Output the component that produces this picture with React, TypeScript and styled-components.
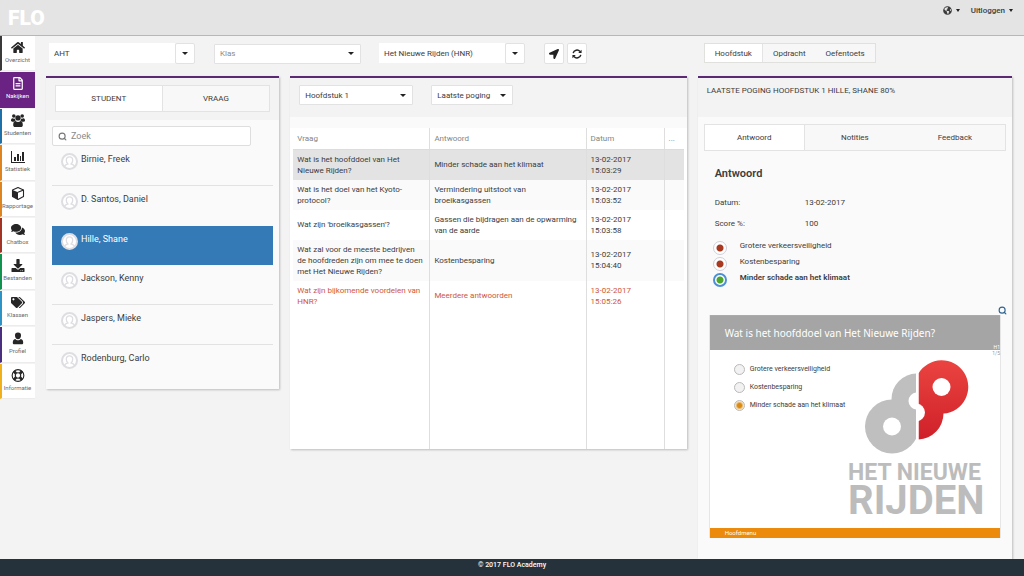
import React from "react";
import styled, { createGlobalStyle, css } from "styled-components";
import {
  FaHome,
  FaRegFileAlt,
  FaComments,
  FaDownload,
  FaTags,
  FaLocationArrow,
  FaGlobeAmericas,
} from "react-icons/fa";
import { Search } from "lucide-react";

const GlobalStyle = createGlobalStyle`
  *, *::before, *::after { box-sizing: border-box; }
  body {
    margin: 0;
    background: #f3f3f4;
    color: #3c3c3c;
    font: 8px/11px Roboto, "Noto Sans", sans-serif;
  }
  button, input, select { font: inherit; color: inherit; margin: 0; }
  button { cursor: pointer; }
`;

const Page = styled.div`
  min-height: 100vh;
  display: flex;
  flex-direction: column;
`;

/* ---------- header ---------- */

const Header = styled.header`
  display: flex;
  justify-content: space-between;
  align-items: flex-start;
  height: 36px;
  padding: 0 11px 0 8px;
  background: #e4e4e4;
  border-bottom: 1px solid #c2b98f;
`;

const Brand = styled.a`
  padding-top: 6px;
  color: #fff;
  font: 900 21px/24px Roboto, sans-serif;
  text-decoration: none;
`;

const HeaderMenu = styled.nav`
  display: flex;
  gap: 11px;
  padding-top: 3px;
`;

const MenuButton = styled.button`
  display: flex;
  align-items: center;
  gap: 4px;
  height: 14px;
  padding: 0;
  border: 0;
  background: none;
  font-weight: 500;
`;

const CaretSvg = styled.svg`
  flex: none;
  width: ${(p: { $w?: number }) => p.$w ?? 6}px;
  height: 3px;
  fill: #222;
`;

const Caret = ({ size }: { size?: number }) => (
  <CaretSvg $w={size} viewBox="0 0 6 3" preserveAspectRatio="none" aria-hidden>
    <path d="M0 0h6L3 3z" />
  </CaretSvg>
);

/* ---------- shell ---------- */

const Shell = styled.div`
  flex: 1;
  display: flex;
  align-items: stretch;
`;

const Sidebar = styled.nav`
  flex: none;
  align-self: flex-start;
  width: 35px;
  min-height: 364px;
  display: grid;
  grid-template-columns: minmax(0, 1fr);
  grid-template-rows: repeat(10, 1fr);
`;

const SideLink = styled.a<{ $color: string; $active?: boolean }>`
  display: flex;
  flex-direction: column;
  align-items: center;
  gap: 1px;
  padding: 5px 2px 0 0;
  margin-bottom: 1px;
  border-left: 2px solid ${(p) => p.$color};
  border-bottom: 1px solid ${(p) => (p.$active ? p.$color : "#ececec")};
  background: ${(p) => (p.$active ? p.$color : "#fff")};
  color: ${(p) => (p.$active ? "#fff" : "#6a6a6a")};
  font-size: 6px;
  line-height: 10px;
  text-decoration: none;
  white-space: nowrap;

  svg {
    flex: none;
    width: 14px;
    height: 13px;
    color: ${(p) => (p.$active ? "#fff" : "#262626")};
  }
`;

const Main = styled.main`
  flex: 1;
  min-width: 0;
  display: grid;
  grid-template-columns: minmax(0, 233fr) minmax(0, 396fr) minmax(0, 314fr);
  grid-template-rows: 40px 1fr;
  column-gap: 11px;
  align-items: start;
  padding: 0 12px 0 11px;
`;

const Filters = styled.div`
  grid-column: span 2;
  display: flex;
  align-items: center;
  padding: 7px 0 0 3px;
`;

const Combo = styled.div`
  display: flex;
  width: 146px;
  margin-right: 19px;
`;

const ComboInput = styled.input`
  flex: 1;
  min-width: 0;
  height: 20px;
  padding: 0 5px;
  border: 0;
  background: #fff;
`;

const SquareButton = styled.button`
  display: flex;
  align-items: center;
  justify-content: center;
  width: 20px;
  height: 21px;
  padding: 0;
  border: 1px solid #e2e2e2;
  border-radius: 2px;
  background: #fff;
  color: #222;
  svg { display: block; }
`;

const IconButtons = styled.div`
  display: flex;
  gap: 3px;
`;

const SelectBox = styled.div<{ $width: number }>`
  display: grid;
  align-items: center;
  width: ${(p) => p.$width}px;
  margin-right: 18px;

  > * { grid-area: 1 / 1; }
  svg { justify-self: end; margin-right: 7px; pointer-events: none; }
`;

const SelectField = styled.select<{ $muted?: boolean }>`
  appearance: none;
  width: 100%;
  height: 20px;
  padding: 0 5px;
  border: 1px solid #e2e2e2;
  border-radius: 1px;
  background: #fff;
  color: ${(p) => (p.$muted ? "#8b8b8b" : "inherit")};
`;

const DropDown = ({ label, value, width, muted }: { label: string; value: string; width: number; muted?: boolean }) => (
  <SelectBox $width={width}>
    <SelectField aria-label={label} $muted={muted} defaultValue={value}>
      <option>{value}</option>
    </SelectField>
    <Caret />
  </SelectBox>
);

const Segments = styled.div`
  justify-self: start;
  display: flex;
  margin: 7px 0 0 6px;
  border: 1px solid #e0e0dc;
`;

const Segment = styled.button<{ $active?: boolean }>`
  height: 18px;
  padding: 0 10px;
  border: 0;
  border-right: ${(p) => (p.$active ? "1px solid #e4e4e4" : "0")};
  background: ${(p) => (p.$active ? "#fff" : "#f7f7f7")};
`;

/* ---------- panels ---------- */

const Panel = styled.section<{ $fill?: boolean }>`
  border-top: 2px solid #5c2a72;
  background: #fafafa;
  box-shadow: 1px 1px 2px rgba(0, 0, 0, 0.22);
  ${(p) => p.$fill && css`align-self: stretch;`}
`;

const PanelHead = styled.div<{ $height: number }>`
  height: ${(p) => p.$height}px;
  background: #f3f3f4;
`;

const TabStrip = styled.div<{ $columns: number }>`
  display: grid;
  grid-template-columns: repeat(${(p) => p.$columns}, 1fr);
  border: 1px solid #e3e3e3;
`;

const Tab = styled.button<{ $active?: boolean }>`
  height: 25px;
  padding: 0;
  border: 0;
  border-right: ${(p) => (p.$active ? "1px solid #e3e3e3" : "0")};
  background: ${(p) => (p.$active ? "#fff" : "#f8f8f8")};
`;

/* ---------- students ---------- */

const StudentHead = styled(PanelHead)`
  padding: 7px 9px 0;
`;

const StudentBody = styled.div`
  padding: 6px 6px 4px;
`;

const SearchBox = styled.label`
  display: flex;
  align-items: center;
  gap: 4px;
  width: 90%;
  height: 20px;
  padding: 0 5px;
  border: 1px solid #dedede;
  border-radius: 2px;
  background: #fff;
  color: #777;
  font-size: 9px;

  input {
    flex: 1;
    min-width: 0;
    padding: 0;
    border: 0;
    outline: 0;
    background: none;
  }
  input::placeholder { color: #8a8a8a; opacity: 1; }
`;

const StudentList = styled.ul`
  display: grid;
  grid-template-rows: repeat(6, 1fr);
  min-height: 239px;
  margin: 0;
  padding: 0;
  list-style: none;
`;

const StudentRow = styled.li<{ $active?: boolean }>`
  border-bottom: 1px solid #e2e2e2;
  &:last-child { border-bottom: 0; }
  &:nth-child(2) { border-bottom-color: transparent; }
  ${(p) => p.$active && css`
    background: #337ab7;
    color: #fff;
    border-bottom-color: #337ab7;
  `}
`;

const StudentButton = styled.button`
  display: flex;
  align-items: flex-start;
  gap: 3px;
  width: 100%;
  height: 100%;
  padding: 6px 9px 0;
  border: 0;
  background: none;
  font-size: 9px;
  line-height: 14px;
  text-align: left;

  svg { flex: none; margin-top: 1px; }
`;

const Avatar = () => (
  <svg width="17" height="17" viewBox="0 0 17 17" aria-hidden>
    <circle cx="8.500" cy="8.500" r="7.500" fill="#fff" stroke="#dedee2" strokeWidth="2" />
    <path
      d="M3.500 13.500c.4-1.700 2-2.200 3.400-2.600-1.100-1-1.600-2.300-1.600-3.700 0-2 1.300-3.400 3.200-3.400s3.200 1.400 3.200 3.400c0 1.400-.5 2.700-1.600 3.700 1.400.4 3 .9 3.400 2.600"
      fill="none"
      stroke="#dedee2"
      strokeWidth="1.300"
    />
  </svg>
);

/* ---------- answers table ---------- */

const TableHead = styled(PanelHead)`
  display: flex;
  align-items: flex-start;
  padding: 7px 9px 0;
`;

const TableBody = styled.div`
  padding: 11px 3px 0;
  background: linear-gradient(#fafafa 11px, #fff 11px);
`;

const AnswerTable = styled.table`
  width: 100%;
  border-collapse: collapse;
  table-layout: fixed;
  background: #fff;

  th {
    height: 21px;
    padding: 1px 4px 0;
    border-bottom: 1px solid #dcdcdc;
    color: #858585;
    font-weight: 400;
    text-align: left;
  }
  td { padding: 4px 6px 4px 4px; vertical-align: middle; }
  th + th, td + td { border-left: 1px solid #dedede; }
`;

const AnswerRow = styled.tr<{ $tone: "selected" | "even" | "odd" | "wrong" }>`
  background: ${(p) => ({ selected: "#e3e3e3", even: "#fafafa", odd: "#fff", wrong: "#fff" })[p.$tone]};
  color: ${(p) => (p.$tone === "wrong" ? "#cf5638" : "inherit")};
`;

const FillerRow = styled.tr`
  height: 138px;
`;

/* ---------- answer detail ---------- */

const DetailHead = styled(PanelHead)`
  padding: 7px 9px 0;
  text-transform: uppercase;
`;

const DetailBody = styled.div`
  padding: 7px 6px 20px;
`;

const Detail = styled.div`
  padding: 0 5px;
`;

const DetailTitle = styled.h2`
  margin: 16px 0 0 6px;
  font-size: 11px;
  line-height: 14px;
  font-weight: 600;
`;

const Facts = styled.dl`
  display: grid;
  grid-template-columns: 90px 1fr;
  row-gap: 10px;
  margin: 16px 0 0 6px;
  dd { margin: 0; }
`;

const Options = styled.div`
  margin-top: 11px;
`;

const Option = styled.label<{ $strong?: boolean }>`
  display: flex;
  align-items: flex-start;
  gap: 13px;
  height: 16px;
  padding-left: 4px;
  font-weight: ${(p) => (p.$strong ? 600 : 400)};
`;

const MarkRadio = styled.input<{ $good?: boolean }>`
  appearance: none;
  flex: none;
  width: 14px;
  height: 14px;
  margin-top: 1px;
  border: ${(p) => (p.$good ? "2px solid #4b8fd6" : "1px solid #cfcfd6")};
  border-radius: 50%;
  background: radial-gradient(circle, ${(p) => (p.$good ? "#4fa62c" : "#a83a22")} 3px, #fff 4px);
`;

const ZoomLine = styled.div`
  display: flex;
  justify-content: flex-end;
  margin: 18px -6px 0 0;
`;

const ZoomButton = styled.button`
  display: flex;
  padding: 0;
  border: 0;
  background: none;
  color: #2f6391;
`;

const Slide = styled.article`
  display: flex;
  flex-direction: column;
  border: 1px solid #e6e6e6;
  border-width: 0 1px;
  background: #fff;
`;

const SlideHead = styled.header`
  display: flex;
  justify-content: space-between;
  height: 35px;
  padding: 0 0 0 15px;
  border-top: 1px solid #d9a650;
  background: #a5a5a5;
  color: #fff;

  h3 {
    margin: 0;
    font: 400 10px/34px "Noto Sans", sans-serif;
  }
  small {
    align-self: flex-end;
    font-size: 5px;
    line-height: 6px;
  }
`;

const SlideBody = styled.div`
  display: grid;
  grid-template-columns: 1fr auto auto;
  column-gap: 6px;
  min-height: 178px;
  padding-left: 24px;

  small {
    color: #999;
    font-size: 5px;
    line-height: 6px;
  }
`;

const SlideOptions = styled.div`
  width: 0;
  padding-top: 10px;
  white-space: nowrap;
`;

const SlideOption = styled.label`
  display: flex;
  align-items: center;
  gap: 5px;
  height: 18px;
  font-size: 7px;
`;

const SlideRadio = styled.input`
  appearance: none;
  flex: none;
  width: 11px;
  height: 11px;
  border: 1px solid #b9b9b9;
  border-radius: 50%;
  background: #f2f2f2;
  &:checked { background: radial-gradient(circle, #d98a12 2px, #f6e6c8 4px); }
`;

const SlideLogo = styled.svg`
  width: 138px;
  height: 164px;
  margin-top: 5px;
  overflow: visible;
`;

const SlideFoot = styled.footer`
  height: 10px;
  padding-left: 15px;
  background: #ec8a0c;
  color: #fff;
  font-size: 6px;
  line-height: 10px;
`;

const Footer = styled.footer`
  height: 17px;
  background: #25313b;
  color: #fff;
  font-size: 7px;
  line-height: 13px;
  font-weight: 500;
  text-align: center;
`;

/* ---------- icons that no package has in this shape ---------- */

const BarsIcon = () => (
  <svg viewBox="0 0 14 13" fill="currentColor" aria-hidden>
    <path d="M0 1h1v11h13v1H0zM3 7h2v4H3zM6 4h2v7H6zM9 6h1v5H9zM11 2h2v9h-2z" />
  </svg>
);

const GroupIcon = () => (
  <svg viewBox="0 0 14 13" fill="currentColor" aria-hidden>
    <circle cx="2.800" cy="2" r="1.800" />
    <circle cx="11.200" cy="2" r="1.800" />
    <circle cx="7" cy="3.900" r="2.700" />
    <path d="M1.600 4.200c1 .6 1.500.6 2.300.2 0 1 .2 1.700.9 2.300-.9.100-1.500.4-1.900 1H1.400C.5 7.700 0 7.300 0 6.500c0-1.200.4-2.300 1.600-2.300zM12.400 4.200c-1 .6-1.500.6-2.300.2 0 1-.2 1.700-.9 2.300.9.100 1.500.4 1.900 1h1.500c.9 0 1.400-.4 1.400-1.200 0-1.200-.4-2.300-1.600-2.300z" />
    <path d="M4.500 6.900c1.600 1.300 3.400 1.300 5 0 1.700.1 2.300 1.800 2.300 4 0 1.300-.7 2.100-2 2.100H4.200c-1.300 0-2-.8-2-2.100 0-2.200.6-3.900 2.300-4z" />
  </svg>
);

const BoxIcon = () => (
  <svg viewBox="0 0 14 13" aria-hidden>
    <path
      d="M7 .6l5.500 2.300v6.600L7 12.400 1.500 9.500V2.900z"
      fill="#fff"
      stroke="currentColor"
      strokeWidth="1.100"
      strokeLinejoin="round"
    />
    <path d="M1.500 2.900L7 5.300v7.100L1.500 9.500z" fill="currentColor" />
    <path d="M7 5.300l5.500-2.400" stroke="currentColor" strokeWidth="1.100" />
  </svg>
);

const PersonIcon = () => (
  <svg viewBox="0 0 14 13" fill="currentColor" aria-hidden>
    <path d="M7 .5a3 3 0 0 1 3 3.200C10 5.600 8.700 7.300 7 7.300S4 5.600 4 3.700A3 3 0 0 1 7 .5zM4.200 6.900c.8.900 1.700 1.300 2.800 1.300s2-.4 2.800-1.300c1.800.2 2.400 1.700 2.400 3.800 0 1-.6 1.600-1.500 1.600H3.300c-.9 0-1.500-.6-1.500-1.600 0-2.100.6-3.600 2.400-3.800z" />
  </svg>
);

const RingIcon = () => (
  <svg viewBox="0 0 14 14" fill="none" stroke="currentColor" aria-hidden>
    <circle cx="7" cy="7" r="6.300" strokeWidth="1.200" />
    <circle cx="7" cy="7" r="2.900" strokeWidth="1.200" />
    <path d="M2.500 2.500l2.400 2.400M11.500 2.500L9.100 4.900M2.500 11.500l2.400-2.400M11.500 11.500L9.100 9.100" strokeWidth="3" />
  </svg>
);

const RefreshIcon = () => (
  <svg width="10" height="10" viewBox="0 0 12 12" fill="none" stroke="currentColor" strokeWidth="1.700" aria-hidden>
    <path d="M1.400 5A4.700 4.700 0 0 1 9.600 3M10.600 7A4.700 4.700 0 0 1 2.400 9" />
    <path d="M11.500.8v4H7.500zM.5 11.200v-4h4z" fill="currentColor" stroke="none" />
  </svg>
);

const HnrLogo = () => (
  <SlideLogo viewBox="848 356 138 164" role="img" aria-label="Het Nieuwe Rijden">
    <defs>
      <linearGradient id="hnr-red" x1="0" y1="0" x2="0" y2="1">
        <stop offset="0" stopColor="#ea4440" />
        <stop offset="1" stopColor="#cf2029" />
      </linearGradient>
      <clipPath id="hnr-left"><path d="M848 356h68v110h-68z" /></clipPath>
      <clipPath id="hnr-right"><path d="M918.500 356H986v110h-67.500z" /></clipPath>
      <mask id="hnr-grey-holes">
        <path d="M848 356h138v164H848z" fill="#fff" />
        <circle cx="892" cy="427.500" r="9" />
        <circle cx="917" cy="402" r="8.500" />
      </mask>
      <mask id="hnr-red-holes">
        <path d="M848 356h138v164H848z" fill="#fff" />
        <circle cx="941.500" cy="388" r="9" />
        <circle cx="916" cy="413.500" r="9" />
      </mask>
    </defs>
    <g clipPath="url(#hnr-left)">
      <g mask="url(#hnr-grey-holes)" fill="#bfbfbf">
        <circle cx="892" cy="427.500" r="27" />
        <circle cx="917" cy="400" r="25.500" />
        <path d="M900 410h16v25h-8z" />
      </g>
    </g>
    <g clipPath="url(#hnr-right)">
      <path
        mask="url(#hnr-red-holes)"
        fill="url(#hnr-red)"
        d="M918.500 374.500A26.700 26.700 0 1 1 943.500 414.600A26 26 0 0 1 918.500 440.500z"
      />
    </g>
    <g fill="#bcbcbc" fontFamily="Roboto, sans-serif" fontWeight="700">
      <text x="848" y="481" fontSize="23">HET NIEUWE</text>
      <text x="848" y="515" fontSize="40">RIJDEN</text>
    </g>
  </SlideLogo>
);

/* ---------- data ---------- */

const sideItems = [
  { label: "Overzicht", color: "#3a3a3a", icon: <FaHome /> },
  { label: "Nakijken", color: "#6b2383", icon: <FaRegFileAlt />, active: true },
  { label: "Studenten", color: "#1f6fa8", icon: <GroupIcon /> },
  { label: "Statistiek", color: "#dd8420", icon: <BarsIcon /> },
  { label: "Rapportage", color: "#dd8420", icon: <BoxIcon /> },
  { label: "Chatbox", color: "#a23426", icon: <FaComments /> },
  { label: "Bestanden", color: "#12924f", icon: <FaDownload /> },
  { label: "Klassen", color: "#2c93c4", icon: <FaTags /> },
  { label: "Profiel", color: "#4b2f7f", icon: <PersonIcon /> },
  { label: "Informatie", color: "#efb01c", icon: <RingIcon /> },
];

const students = ["Birnie, Freek", "D. Santos, Daniel", "Hille, Shane", "Jackson, Kenny", "Jaspers, Mieke", "Rodenburg, Carlo"];

const answers = [
  { q: "Wat is het hoofddoel van Het Nieuwe Rijden?", a: "Minder schade aan het klimaat", t: "15:03:29", tone: "selected" },
  { q: "Wat is het doel van het Kyoto-protocol?", a: "Vermindering uitstoot van broeikasgassen", t: "15:03:52", tone: "even" },
  { q: "Wat zijn 'broeikasgassen'?", a: "Gassen die bijdragen aan de opwarming van de aarde", t: "15:03:58", tone: "odd" },
  { q: "Wat zal voor de meeste bedrijven de hoofdreden zijn om mee te doen met Het Nieuwe Rijden?", a: "Kostenbesparing", t: "15:04:40", tone: "even" },
  { q: "Wat zijn bijkomende voordelen van HNR?", a: "Meerdere antwoorden", t: "15:05:26", tone: "wrong" },
] as const;

const options = ["Grotere verkeersveiligheid", "Kostenbesparing", "Minder schade aan het klimaat"];

export default function App() {
  return (
    <Page>
      <GlobalStyle />
      <Header>
        <Brand href="#">FLO</Brand>
        <HeaderMenu>
          <MenuButton aria-label="Taal">
            <FaGlobeAmericas size={9} />
            <Caret size={4} />
          </MenuButton>
          <MenuButton>
            Uitloggen
            <Caret size={4} />
          </MenuButton>
        </HeaderMenu>
      </Header>

      <Shell>
        <Sidebar>
          {sideItems.map((item) => (
            <SideLink key={item.label} href="#" $color={item.color} $active={item.active}>
              {item.icon}
              <span>{item.label}</span>
            </SideLink>
          ))}
        </Sidebar>

        <Main>
          <Filters>
            <Combo>
              <ComboInput aria-label="Bedrijf" defaultValue="AHT" />
              <SquareButton aria-label="Bedrijven tonen"><Caret /></SquareButton>
            </Combo>
            <DropDown label="Klas" value="Klas" width={147} muted />
            <Combo>
              <ComboInput aria-label="Cursus" defaultValue="Het Nieuwe Rijden (HNR)" />
              <SquareButton aria-label="Cursussen tonen"><Caret /></SquareButton>
            </Combo>
            <IconButtons>
              <SquareButton aria-label="Ga"><FaLocationArrow size={10} /></SquareButton>
              <SquareButton aria-label="Vernieuwen"><RefreshIcon /></SquareButton>
            </IconButtons>
          </Filters>
          <Segments>
            <Segment $active>Hoofdstuk</Segment>
            <Segment>Opdracht</Segment>
            <Segment>Oefentoets</Segment>
          </Segments>

          <Panel>
            <StudentHead $height={42}>
              <TabStrip $columns={2}>
                <Tab $active>STUDENT</Tab>
                <Tab>VRAAG</Tab>
              </TabStrip>
            </StudentHead>
            <StudentBody>
              <SearchBox>
                <Search size={9} strokeWidth={3} />
                <input type="text" placeholder="Zoek" aria-label="Zoek" />
              </SearchBox>
              <StudentList>
                {students.map((name) => (
                  <StudentRow key={name} $active={name === "Hille, Shane"}>
                    <StudentButton>
                      <Avatar />
                      {name}
                    </StudentButton>
                  </StudentRow>
                ))}
              </StudentList>
            </StudentBody>
          </Panel>

          <Panel>
            <TableHead $height={39}>
              <DropDown label="Hoofdstuk" value="Hoofdstuk 1" width={114} />
              <DropDown label="Poging" value="Laatste poging" width={82} />
            </TableHead>
            <TableBody>
              <AnswerTable>
                <colgroup>
                  <col style={{ width: "35%" }} />
                  <col style={{ width: "40%" }} />
                  <col style={{ width: "20%" }} />
                  <col style={{ width: "5%" }} />
                </colgroup>
                <thead>
                  <tr>
                    <th>Vraag</th>
                    <th>Antwoord</th>
                    <th>Datum</th>
                    <th>...</th>
                  </tr>
                </thead>
                <tbody>
                  {answers.map((row) => (
                    <AnswerRow key={row.t} $tone={row.tone}>
                      <td>{row.q}</td>
                      <td>{row.a}</td>
                      <td>13-02-2017<br />{row.t}</td>
                      <td />
                    </AnswerRow>
                  ))}
                  <FillerRow aria-hidden>
                    <td /><td /><td /><td />
                  </FillerRow>
                </tbody>
              </AnswerTable>
            </TableBody>
          </Panel>

          <Panel $fill>
            <DetailHead $height={39}>Laatste poging hoofdstuk 1 Hille, Shane 80%</DetailHead>
            <DetailBody>
              <TabStrip $columns={3}>
                <Tab $active>Antwoord</Tab>
                <Tab>Notities</Tab>
                <Tab>Feedback</Tab>
              </TabStrip>
              <Detail>
                <DetailTitle>Antwoord</DetailTitle>
                <Facts>
                  <dt>Datum:</dt>
                  <dd>13-02-2017</dd>
                  <dt>Score %:</dt>
                  <dd>100</dd>
                </Facts>
                <Options>
                  {options.map((text, i) => (
                    <Option key={text} $strong={i === 2}>
                      <MarkRadio type="radio" name="answer" $good={i === 2} defaultChecked={i === 2} />
                      {text}
                    </Option>
                  ))}
                </Options>
                <ZoomLine>
                  <ZoomButton aria-label="Vergroten"><Search size={9} strokeWidth={3} /></ZoomButton>
                </ZoomLine>
                <Slide>
                  <SlideHead>
                    <h3>Wat is het hoofddoel van Het Nieuwe Rijden?</h3>
                    <small>H1</small>
                  </SlideHead>
                  <SlideBody>
                    <SlideOptions>
                      {options.map((text, i) => (
                        <SlideOption key={text}>
                          <SlideRadio type="radio" name="slide" defaultChecked={i === 2} />
                          {text}
                        </SlideOption>
                      ))}
                    </SlideOptions>
                    <HnrLogo />
                    <small>1/5</small>
                  </SlideBody>
                  <SlideFoot>Hoofdmenu</SlideFoot>
                </Slide>
              </Detail>
            </DetailBody>
          </Panel>
        </Main>
      </Shell>
      <Footer>© 2017 FLO Academy</Footer>
    </Page>
  );
}
